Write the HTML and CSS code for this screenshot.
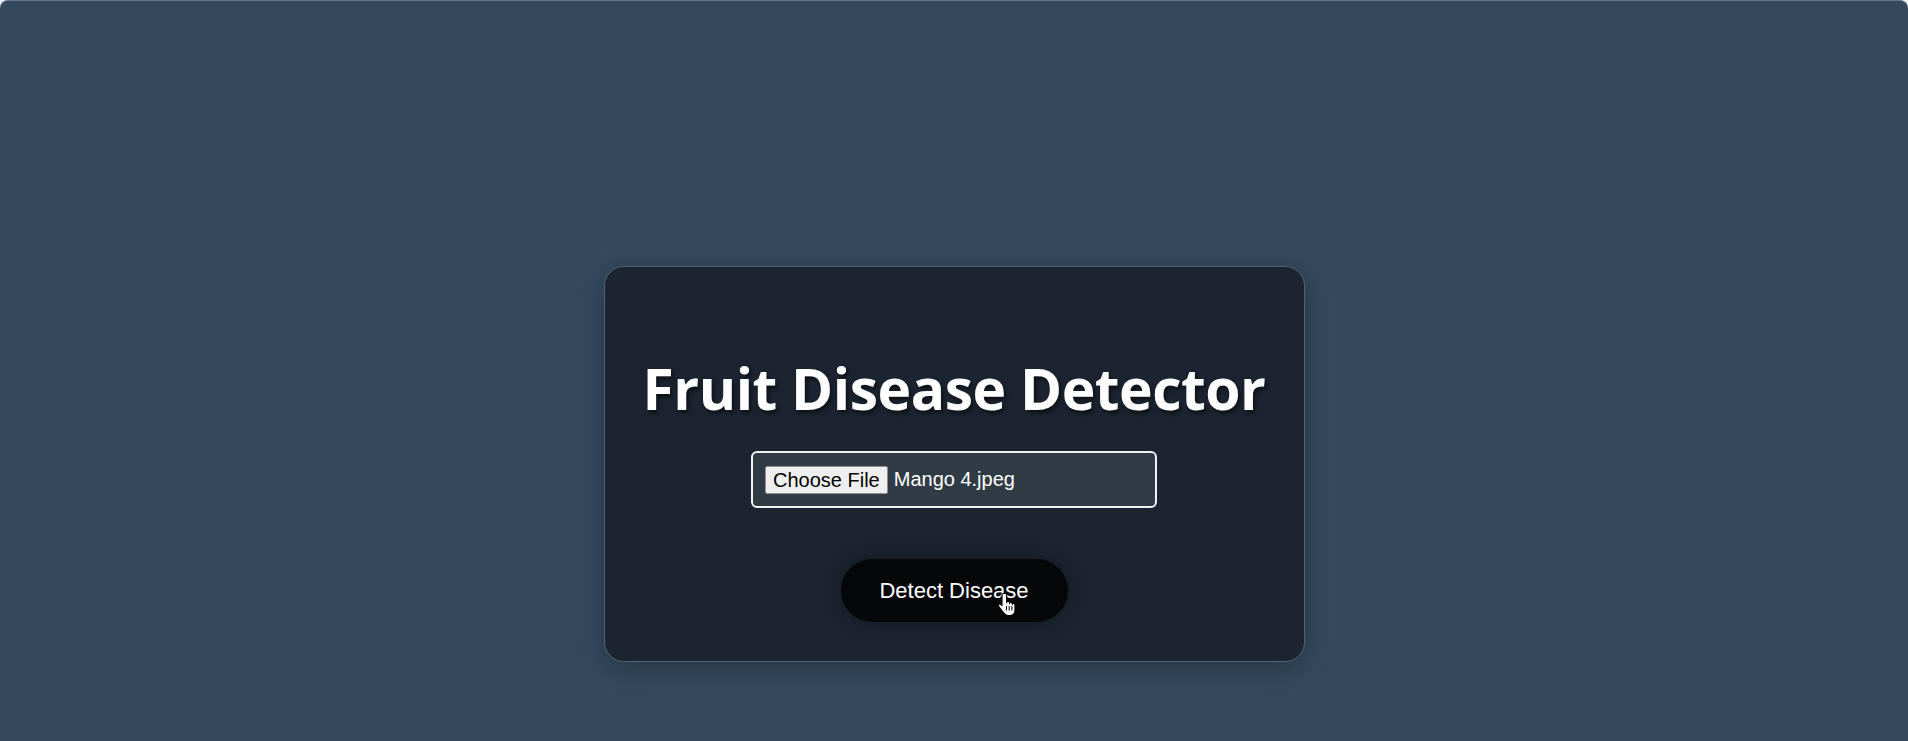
FILE: index.html
```html
<!DOCTYPE html>
<html lang="en">
<head>
<meta charset="utf-8">
<title>Fruit Disease Detector</title>
<link rel="stylesheet" href="styles.css">
</head>
<body>
<div class="app">
  <main class="card">
    <h1 class="title">Fruit Disease Detector</h1>
    <form class="form">
      <label class="file-field">
        <span class="file-btn">Choose File</span>
        <span class="file-name">Mango 4.jpeg</span>
      </label>
      <div class="submit-wrap">
        <button type="button" class="detect-btn">Detect Disease</button>
        <svg class="cursor" width="18" height="26" viewBox="0 0 18 26" aria-hidden="true">
          <path d="M5.5 1.5c-.9 0-1.5.7-1.5 1.6v10.4l-1-1c-.7-.7-1.8-.7-2.3 0-.5.6-.4 1.5.1 2.1l4.2 5.6c1.2 1.6 2.6 3.3 4.8 3.3h2.4c2.9 0 4.8-2.3 4.8-5.2v-5.5c0-.9-.6-1.5-1.4-1.5-.7 0-1.3.6-1.3 1.3v-1c0-.9-.6-1.5-1.4-1.5-.8 0-1.4.6-1.4 1.4v-.9c0-.9-.6-1.5-1.4-1.5-.8 0-1.4.6-1.4 1.5V3.1c0-.9-.6-1.6-1.5-1.6z" fill="#fff" stroke="#000" stroke-width="1.2" stroke-linejoin="round"/>
          <path d="M8.5 14v4.5M11.2 14v4.5M13.9 14v4.5" stroke="#000" stroke-width="1" fill="none"/>
        </svg>
      </div>
    </form>
  </main>
</div>
</body>
</html>
```

FILE: styles.css
```css
html {
  background: #eef0f2;
}

body {
  margin: 0;
  font-family: "Liberation Sans", Arial, sans-serif;
}

.app {
  min-height: 741px;
  box-sizing: border-box;
  background: #34495e;
  border-top: 1px solid #64768a;
  border-radius: 8px 8px 0 0;
  display: flex;
  flex-direction: column;
  align-items: center;
  padding-top: 265px;
}

.card {
  width: 701px;
  box-sizing: border-box;
  background: #1b2430;
  border: 1px solid #56616d;
  border-radius: 20px;
  box-shadow: 0 6px 24px rgba(0, 0, 0, 0.25);
  padding: 87px 20px 39px;
  display: flex;
  flex-direction: column;
  align-items: center;
}

.title {
  margin: 0;
  font-family: "Open Sans", "Noto Sans", sans-serif;
  font-weight: 700;
  font-size: 57px;
  line-height: 68px;
  letter-spacing: -0.5px;
  color: #ffffff;
  text-shadow: 2px 3px 4px rgba(0, 0, 0, 0.55);
}

.form {
  margin-top: 29px;
  display: flex;
  flex-direction: column;
  align-items: center;
}

.file-field {
  width: 406px;
  height: 57px;
  box-sizing: border-box;
  border: 2px solid #f2f2f2;
  border-radius: 6px;
  background: #313b46;
  padding: 0 12px;
  display: flex;
  align-items: center;
  font-size: 20px;
  color: #ffffff;
  cursor: pointer;
}

.file-btn {
  display: inline-block;
  box-sizing: border-box;
  height: 28px;
  padding: 1px 7px 0;
  margin-right: 6px;
  line-height: 25px;
  color: #000000;
  background: #efefef;
  border: 1px solid #8f8f8f;
  border-radius: 2px;
}

.file-name {
  line-height: 25px;
}

.submit-wrap {
  position: relative;
  margin-top: 51px;
}

.detect-btn {
  height: 63px;
  width: 227px;
  border: none;
  border-radius: 32px;
  background: #050709;
  color: #ffffff;
  font-family: "Liberation Sans", Arial, sans-serif;
  font-size: 22px;
  box-shadow: 0 0 18px rgba(0, 0, 0, 0.35);
  cursor: pointer;
}

.cursor {
  position: absolute;
  left: 157px;
  top: 33px;
  pointer-events: none;
}
```
